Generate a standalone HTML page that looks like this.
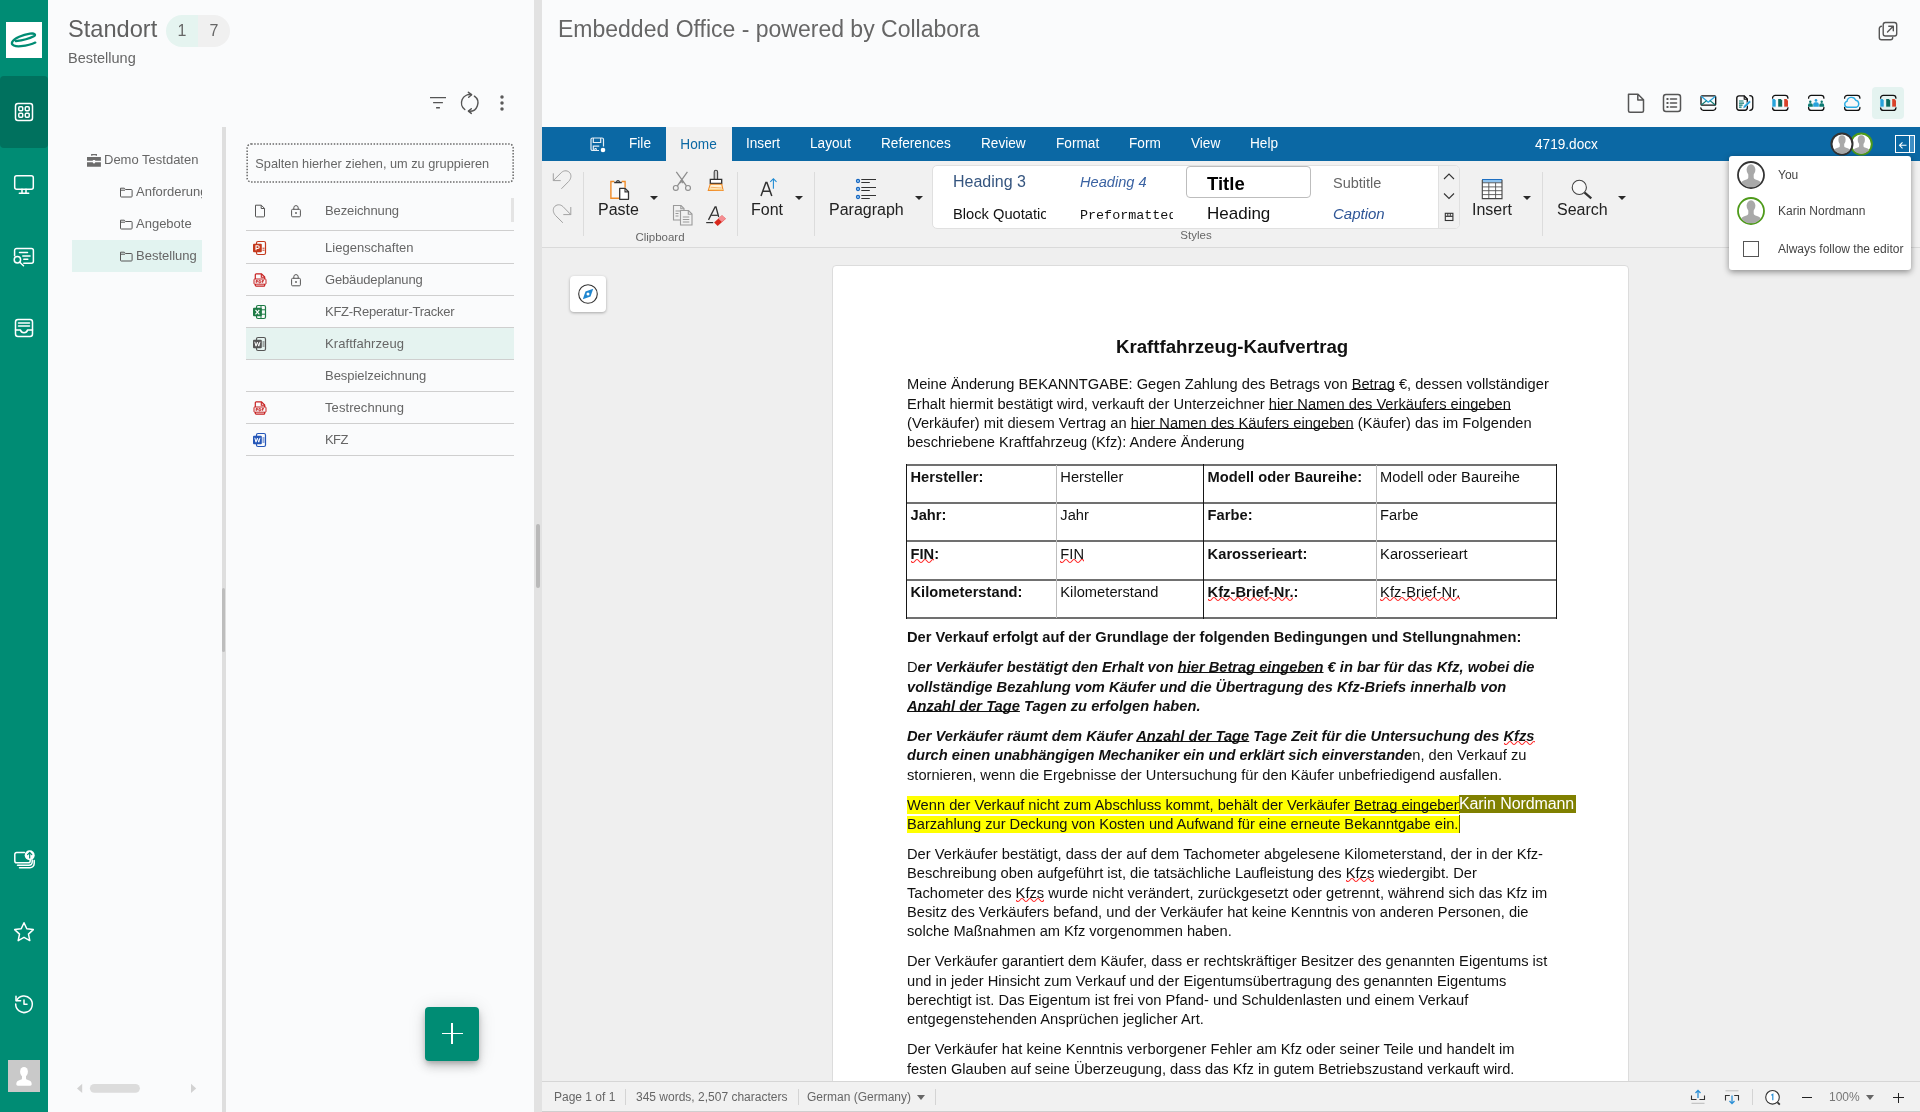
<!DOCTYPE html>
<html lang="de">
<head>
<meta charset="utf-8">
<title>Standort - Bestellung</title>
<style>
*{box-sizing:border-box;margin:0;padding:0}
html,body{width:1920px;height:1112px;overflow:hidden;background:#fafbfc;font-family:"Liberation Sans",sans-serif;color:#5a5a5a}
body{will-change:transform}
.abs{position:absolute}
#nav{position:absolute;left:0;top:0;width:48px;height:1112px;background:#008c74}
#nav .active{position:absolute;left:0;top:76px;width:48px;height:72px;background:#00715e;border-radius:4px}
#nav .logo{position:absolute;left:6px;top:22px;width:36px;height:36px;background:#fff}
#nav svg.ic{position:absolute;left:12px;width:24px;height:24px;fill:none;stroke:#fff;stroke-width:1.5;stroke-linecap:round;stroke-linejoin:round}
#nav .avatar{position:absolute;left:8px;top:1060px;width:32px;height:32px;background:#c9c9c9;overflow:hidden}
#lp{position:absolute;left:48px;top:0;width:486px;height:1112px;background:#fafbfc}
#split1{position:absolute;left:534px;top:0;width:8px;height:1112px;background:#e2e2e2}
#split1 i{position:absolute;left:2px;top:524px;width:4px;height:64px;background:#b9b9b9;border-radius:2px}
#split2{position:absolute;left:222px;top:127px;width:4px;height:985px;background:#dedede}
#split2 i{position:absolute;left:0;top:461px;width:3px;height:64px;background:#bdbdbd;border-radius:2px}
.h1{position:absolute;left:68px;top:12px;font-size:23.6px;line-height:34px;color:#606060;white-space:nowrap}
.h2{position:absolute;left:68px;top:49px;font-size:14.5px;line-height:18px;color:#666;white-space:nowrap}
.chip{position:absolute;left:166px;top:15px;width:64px;height:32px;border-radius:16px;overflow:hidden;font-size:16px;color:#666}
.chip b{font-weight:400;position:absolute;top:0;height:32px;line-height:31px;text-align:center}
.chip b.a{left:0;width:32px;background:#e5f4f0}
.chip b.b{left:32px;width:32px;background:#f0f0f0}
.lpic{position:absolute;width:24px;height:24px;fill:none;stroke:#555;stroke-width:1.5;stroke-linecap:round;stroke-linejoin:round}
.tree{position:absolute;font-size:13px;color:#666;white-space:nowrap;line-height:32px;height:32px;overflow:hidden}
.tree.sel{background:#e2f3f0}
.tree svg{position:absolute;top:9px;width:14px;height:14px}
.row{position:absolute;left:246px;width:268px;height:32px;border-bottom:1px solid #cfcfcf;font-size:13px;line-height:32px;color:#666;white-space:nowrap}
.row span{position:absolute;left:79px;top:0}
.row.sel{background:#e5f3f0;height:32px}
.row svg{position:absolute;top:8px;width:16px;height:16px}
.row svg.f{left:6px}
.row svg.l{left:42px}
#grp{position:absolute;left:246px;top:143px;width:268px;height:40px;border:2px solid transparent;border-radius:4px;font-size:12.75px;line-height:37px;padding-left:7.300px;color:#666;white-space:nowrap}
#fab{position:absolute;left:425px;top:1007px;width:54px;height:54px;background:#008c74;border-radius:4px;box-shadow:0 3px 5px -1px rgba(0,0,0,.2),0 6px 10px 0 rgba(0,0,0,.14),0 1px 18px 0 rgba(0,0,0,.12)}
#fab i{position:absolute;background:#fff}
#rp{position:absolute;left:542px;top:0;width:1378px;height:127px;background:#fafbfc}
.rt{position:absolute;left:558px;top:12px;font-size:23px;line-height:34px;color:#666;white-space:nowrap}
.rpic{position:absolute;top:91px;width:24px;height:24px;fill:none;stroke:#444;stroke-width:1.4;stroke-linecap:round;stroke-linejoin:round}
/* office */
#of{position:absolute;left:542px;top:127px;width:1378px;height:985px;background:#efefef;overflow:hidden;color:#2b2b2b}
#of .in{position:absolute;left:-542px;top:-127px;width:1920px;height:1112px}
#menubar{position:absolute;left:542px;top:127px;width:1378px;height:34px;background:#0b68a4}
#menubar .t{position:absolute;top:0;height:34px;line-height:33px;font-size:14.670px;transform:scaleX(.93);transform-origin:0 50%;color:#fff;white-space:nowrap}
#menubar .home{position:absolute;left:124px;top:0;width:66px;height:34px;background:#f1f1f1;color:#0b68a4;text-align:center;line-height:35px;font-size:14.670px}
#ribbon{position:absolute;left:542px;top:161px;width:1378px;height:87px;background:#f1f1f1;border-bottom:1px solid #dadada}
#status{position:absolute;left:542px;top:1081px;width:1378px;height:31px;background:#f1f1f1;border-top:1px solid #d6d6d6;border-bottom:1px solid #cfcfcf;font-size:12px;color:#666}
#page{position:absolute;left:832px;top:265px;width:797px;height:900px;background:#fff;border:1px solid #dcdcdc;border-radius:4px 4px 0 0}
.dl{position:absolute;left:907px;height:20px;line-height:20px;font-size:14.67px;color:#111;white-space:nowrap;letter-spacing:0.03px}
.dl u{text-decoration-thickness:1.1px;text-underline-offset:0.400px;text-decoration-skip-ink:none}
.dl .sp{text-decoration:none}
.bi{font-weight:bold;font-style:italic}
.hl{background:#ffff00}
.tc{position:absolute;font-size:14.67px;line-height:19px;color:#111;white-space:nowrap}
.dd{width:0;height:0;border-left:4px solid transparent;border-right:4px solid transparent;border-top:4.700px solid #2a2a2a}
.dd.g{border-left-width:4px;border-right-width:4px;border-top:5px solid #666}
.lbl{font-size:11.500px;line-height:14px;color:#666;text-align:center;white-space:nowrap}
.st{line-height:22px;white-space:nowrap}
#status .s{top:1px;line-height:29px;white-space:nowrap;font-size:12px}
#status .sv{top:7px;width:1px;height:16px;background:#d4d4d4}
</style>
</head>
<body>
<div id="nav">
  <div class="active"></div>
  <div class="logo">
    <svg viewBox="0 0 36 36" width="36" height="36"><path d="M9.800 19.200C16 18.400 24 16.200 27.800 14.200C30.500 12.600 28.500 11 24 11.700C17 12.800 8.200 16 6.200 20C4.800 23.200 9 24.800 15 24.200C21 23.600 26 22.300 29.300 20.600" fill="none" stroke="#008c74" stroke-width="2.300" stroke-linecap="round"/></svg>
  </div>
  <svg class="ic" style="top:100px" viewBox="0 0 24 24"><rect x="3.5" y="3.5" width="17" height="17" rx="2.5"/><rect x="6.8" y="6.8" width="3.9" height="3.9" rx="1"/><rect x="13.3" y="6.8" width="3.9" height="3.9" rx="1"/><rect x="6.8" y="13.3" width="3.9" height="3.9" rx="1"/><rect x="13.3" y="13.3" width="3.9" height="3.9" rx="1"/></svg>
  <svg class="ic" style="top:173px" viewBox="0 0 24 24"><rect x="2.700" y="2.800" width="18.600" height="13.400" rx="2"/><path d="M10 16.300v3.600M14 16.300v3.600M7.300 20.200h9.400"/></svg>
  <svg class="ic" style="top:245px" viewBox="0 0 24 24"><path d="M2.600 10.800V5.500a2 2 0 0 1 2-2h14.800a2 2 0 0 1 2 2v10.800a2 2 0 0 1-2 2h-7.600"/><path d="M7.500 7.500h8M10.800 11h7.200M11.800 14.300h4"/><circle cx="5.400" cy="14.800" r="3.200"/><path d="M7.800 17.200l3.700 3.500"/></svg>
  <svg class="ic" style="top:316px" viewBox="0 0 24 24"><rect x="3.5" y="3.5" width="17" height="17" rx="2.5"/><path d="M6.5 7h11M6.5 10h11"/><path d="M3.5 14h5c.4 1.8 1.7 2.7 3.5 2.7s3.100-.9 3.500-2.700h5"/></svg>
  <svg class="ic" style="top:846px" viewBox="0 0 24 24"><path d="M12.500 6.600H4.600a1.800 1.800 0 0 0-1.800 1.800v6.500a1.800 1.800 0 0 0 1.800 1.800h11.800a1.800 1.800 0 0 0 1.800-1.800v-1"/><path d="M5.500 19.300h11.500a3.200 3.200 0 0 0 3.200-3.200v-2"/><path d="M7.500 21.800h10.500a4.200 4.200 0 0 0 4.200-4.200v-3"/><circle cx="17.700" cy="9.200" r="5" fill="#fff" stroke="none"/><path d="M17.700 12V6.600M15.600 8.600l2.100-2.100 2.100 2.100" stroke="#008c74" stroke-width="1.200"/></svg>
  <svg class="ic" style="top:920px" viewBox="0 0 24 24"><path d="M12 2.800l2.800 6 6.500.800-4.800 4.500 1.300 6.500L12 17.300l-5.800 3.300 1.300-6.500L2.700 9.600l6.500-.8z"/></svg>
  <svg class="ic" style="top:992px" viewBox="0 0 24 24"><path d="M4.600 8.500A8.300 8.300 0 1 1 3.700 12"/><path d="M4 4.200v4.600h4.600"/><path d="M12 8v4.300h3" /></svg>
  <div class="avatar"><svg viewBox="0 0 32 32" width="32" height="32"><ellipse cx="16" cy="11.800" rx="3.900" ry="4.900" fill="#fff"/><path d="M14 15v3.200c0 1-.8 1.400-2.600 2-2 .7-3.100 1.700-3.100 3.800 0 1 .5 1.700 1.500 1.700h12.400c1 0 1.500-.7 1.500-1.700 0-2.100-1.100-3.100-3.100-3.800-1.800-.6-2.600-1-2.600-2V15z" fill="#fff"/></svg></div>
</div>
<div id="lp"></div>
<div class="h1">Standort</div>
<div class="chip"><b class="a">1</b><b class="b">7</b></div>
<div class="h2">Bestellung</div>
<svg class="lpic" style="left:426px;top:91px" viewBox="0 0 24 24" stroke="#5a5a5a"><path d="M4 6.600h16M7.100 11.600h9.800M10.100 16.700h3.800" stroke-width="1.350" stroke-linecap="butt"/></svg>
<svg class="lpic" style="left:458px;top:91px" viewBox="0 0 24 24" stroke="#5a5a5a"><path d="M13.300 3.700A8.300 8.300 0 0 0 6.800 18.500M16.400 5.200A8.300 8.300 0 0 1 10.700 20.200" stroke-width="1.450"/><path d="M10.400 1.300l3.200 2.400-2.900 2.600M13.300 17.700l-2.900 2.400 2.900 2.300" stroke-width="1.450"/></svg>
<svg class="lpic" style="left:490px;top:91px" viewBox="0 0 24 24"><circle cx="12" cy="5.900" r="1.750" fill="#5a5a5a" stroke="none"/><circle cx="12" cy="12" r="1.750" fill="#5a5a5a" stroke="none"/><circle cx="12" cy="18.100" r="1.750" fill="#5a5a5a" stroke="none"/></svg>
<div id="split2"><i></i></div>
<div class="tree" style="left:72px;top:144px;width:130px"><svg style="left:14px;width:16px;height:14px" viewBox="0 0 16 14"><path d="M1 4.100h13.900v3.650H1z M1 9.200h13.900v4.600H1z" fill="#6c6c6c"/><path d="M5.100 1.100h5.900v1.700h-1.300v-.6H6.400v.6H5.100z" fill="#6c6c6c"/><rect x="7" y="7" width="2" height="3.300" fill="#fafbfc"/><rect x="6.400" y="7.750" width="3.200" height="1.450" fill="#fafbfc"/></svg><span style="position:absolute;left:32px">Demo Testdaten</span></div>
<div class="tree" style="left:72px;top:176px;width:130px"><svg style="left:47px" viewBox="0 0 14 14"><path d="M1.500 3.200h3.800l1.200 1.300h5.800a.8.800 0 0 1 .8.800v5.900a.8.800 0 0 1-.8.800H2.300a.8.800 0 0 1-.8-.8z M1.500 5.200h4.500" fill="none" stroke="#555" stroke-width="1"/></svg><span style="position:absolute;left:64px">Anforderungen</span></div>
<div class="tree" style="left:72px;top:208px;width:130px"><svg style="left:47px" viewBox="0 0 14 14"><path d="M1.500 3.200h3.800l1.200 1.300h5.800a.8.800 0 0 1 .8.800v5.900a.8.800 0 0 1-.8.800H2.300a.8.800 0 0 1-.8-.8z M1.500 5.200h4.500" fill="none" stroke="#555" stroke-width="1"/></svg><span style="position:absolute;left:64px">Angebote</span></div>
<div class="tree sel" style="left:72px;top:240px;width:130px"><svg style="left:47px" viewBox="0 0 14 14"><path d="M1.500 3.200h3.800l1.200 1.300h5.800a.8.800 0 0 1 .8.800v5.900a.8.800 0 0 1-.8.800H2.300a.8.800 0 0 1-.8-.8z M1.500 5.200h4.500" fill="none" stroke="#555" stroke-width="1"/></svg><span style="position:absolute;left:64px">Bestellung</span></div>
<svg class="abs" style="left:245px;top:142px" width="270" height="42"><rect x="2.150" y="1.900" width="266" height="38.100" rx="4" fill="none" stroke="#686868" stroke-width="1.500" stroke-dasharray="1.500 1.560"/></svg><div id="grp">Spalten hierher ziehen, um zu gruppieren</div>
<div class="abs" style="left:511px;top:198px;width:3px;height:24px;background:#e4e4e4"></div>
<div class="row" style="top:195px;height:36px;line-height:32px"><svg class="f" style="top:7.500px" viewBox="0 0 16 16"><path d="M3.500 2.200h5.800l3.200 3.200v7.600a.9.900 0 0 1-.9.900H4.400a.9.900 0 0 1-.9-.9z M9.200 2.300v3.200h3.200" fill="none" stroke="#555" stroke-width="1"/></svg><svg class="l" style="top:7.500px" viewBox="0 0 16 16"><rect x="3.600" y="6.300" width="8.800" height="7.500" rx="1" fill="none" stroke="#555" stroke-width="1"/><path d="M5.800 6.300V4.800a2.200 2.200 0 0 1 4.400 0v1.500" fill="none" stroke="#555" stroke-width="1"/><circle cx="8" cy="10" r=".9" fill="#555"/></svg><span style="letter-spacing:-0.115px">Bezeichnung</span></div>
<div class="row" style="top:232px"><svg class="f" viewBox="0 0 16 16"><rect x="4.500" y="1.500" width="9" height="13" rx="1.500" fill="none" stroke="#c4391d" stroke-width="1.200"/><rect x="1" y="3.800" width="8.800" height="8.400" rx="1" fill="#c4391d"/><path d="M4 10.300V5.700h1.800a1.400 1.400 0 0 1 0 2.800H4" fill="none" stroke="#fff" stroke-width="1.100"/><path d="M10.500 8.200h2M10.500 10.200h2" stroke="#c4391d" stroke-width="1"/></svg><span style="letter-spacing:0.03px">Liegenschaften</span></div>
<div class="row" style="top:264px"><svg class="f" viewBox="0 0 16 16"><path d="M3.300 7V2.800a.9.900 0 0 1 .9-.9h5.300l3.200 3.200V7" fill="none" stroke="#c62020" stroke-width="1.200"/><path d="M9.300 2v3.200h3.200" fill="none" stroke="#c62020" stroke-width="1.100"/><rect x="2" y="7" width="12" height="5.200" rx=".8" fill="#fafbfc" stroke="#c62020" stroke-width="1"/><path d="M3.300 12v1.300a.9.900 0 0 0 .9.900h7.600a.9.900 0 0 0 .9-.9V12" fill="none" stroke="#c62020" stroke-width="1.200"/><path d="M4.200 10.800V8.500h.9a.7.700 0 0 1 0 1.400h-.9M7 8.500v2.300h.700a1.100 1.100 0 0 0 0-2.300zM10.300 10.800V8.500h1.500M10.300 9.700h1.200" fill="none" stroke="#c62020" stroke-width=".95"/></svg><svg class="l" viewBox="0 0 16 16"><rect x="3.600" y="6.300" width="8.800" height="7.500" rx="1" fill="none" stroke="#555" stroke-width="1"/><path d="M5.800 6.300V4.800a2.200 2.200 0 0 1 4.400 0v1.500" fill="none" stroke="#555" stroke-width="1"/><circle cx="8" cy="10" r=".9" fill="#555"/></svg><span style="letter-spacing:-0.155px">Gebäudeplanung</span></div>
<div class="row" style="top:296px"><svg class="f" viewBox="0 0 16 16"><rect x="4.500" y="1.500" width="9" height="13" rx="1.500" fill="none" stroke="#1e7a45" stroke-width="1.200"/><path d="M9 1.500v13M9 5.800h4.500M9 10.200h4.500" stroke="#1e7a45" stroke-width="1"/><rect x="1" y="3.800" width="8.800" height="8.400" rx="1" fill="#1e7a45"/><path d="M3.500 5.800l3.800 4.500M7.300 5.800l-3.800 4.500" stroke="#fff" stroke-width="1.200"/></svg><span style="letter-spacing:-0.253px">KFZ-Reperatur-Tracker</span></div>
<div class="row sel" style="top:328px"><svg class="f" viewBox="0 0 16 16"><rect x="4.500" y="1.500" width="9" height="13" rx="1.500" fill="none" stroke="#555" stroke-width="1.200"/><path d="M10.500 6h2M10.500 8h2M10.500 10h2" stroke="#555" stroke-width="1"/><rect x="1" y="3.800" width="8.800" height="8.400" rx="1" fill="#555"/><path d="M2.800 5.800l1.200 4.400 1.400-4 1.400 4 1.200-4.400" fill="none" stroke="#fff" stroke-width="1"/></svg><span style="letter-spacing:0.073px">Kraftfahrzeug</span></div>
<div class="row" style="top:360px"><span style="letter-spacing:-0.044px">Bespielzeichnung</span></div>
<div class="row" style="top:392px"><svg class="f" viewBox="0 0 16 16"><path d="M3.300 7V2.800a.9.900 0 0 1 .9-.9h5.300l3.200 3.200V7" fill="none" stroke="#c62020" stroke-width="1.200"/><path d="M9.300 2v3.200h3.200" fill="none" stroke="#c62020" stroke-width="1.100"/><rect x="2" y="7" width="12" height="5.200" rx=".8" fill="#fafbfc" stroke="#c62020" stroke-width="1"/><path d="M3.300 12v1.300a.9.900 0 0 0 .9.900h7.600a.9.900 0 0 0 .9-.9V12" fill="none" stroke="#c62020" stroke-width="1.200"/><path d="M4.200 10.800V8.500h.9a.7.700 0 0 1 0 1.400h-.9M7 8.500v2.300h.700a1.100 1.100 0 0 0 0-2.300zM10.300 10.800V8.500h1.500M10.300 9.700h1.200" fill="none" stroke="#c62020" stroke-width=".95"/></svg><span style="letter-spacing:0.078px">Testrechnung</span></div>
<div class="row" style="top:424px"><svg class="f" viewBox="0 0 16 16"><rect x="4.500" y="1.500" width="9" height="13" rx="1.500" fill="none" stroke="#2456b8" stroke-width="1.200"/><path d="M10.500 6h2M10.500 8h2M10.500 10h2" stroke="#2456b8" stroke-width="1"/><rect x="1" y="3.800" width="8.800" height="8.400" rx="1" fill="#2456b8"/><path d="M2.800 5.800l1.200 4.400 1.400-4 1.400 4 1.200-4.400" fill="none" stroke="#fff" stroke-width="1"/></svg><span style="letter-spacing:-0.59px">KFZ</span></div>
<div id="fab"><i style="left:16.500px;top:25.900px;width:21px;height:1.300px"></i><i style="left:26.300px;top:16.300px;width:1.300px;height:21px"></i></div>
<svg class="abs" style="left:76px;top:1082px" width="124" height="13" viewBox="0 0 124 13"><path d="M6.200 1.800v9.200L1 6.400z" fill="#d2d2d2"/><path d="M115 1.800v9.200l5.200-4.600z" fill="#d2d2d2"/><rect x="13.900" y="1.900" width="50" height="8.800" rx="4.400" fill="#dcdcdc"/></svg>
<div id="split1"><i></i></div>
<div id="rp"></div>
<div class="rt">Embedded Office - powered by Collabora</div>
<svg class="rpic" style="left:1876px;top:19px" viewBox="0 0 24 24"><rect x="7.200" y="3.500" width="13.500" height="13.500" rx="2.200" stroke="#555"/><path d="M5.500 7.300a2.200 2.200 0 0 0-2.200 2.200v9a2.200 2.200 0 0 0 2.200 2.200h9a2.200 2.200 0 0 0 2.200-2.200" stroke="#555"/><path d="M11.500 13l5.700-5.700M12.800 7.200h4.500v4.500" stroke="#555"/></svg>
<div class="abs" style="left:1872px;top:87px;width:32px;height:32px;border-radius:4px;background:#e4f3f0"></div>
<svg class="rpic" style="left:1624px" viewBox="0 0 24 24"><path d="M4.500 3.300h9.500l5.500 5.500v11a1.500 1.500 0 0 1-1.500 1.500H6a1.500 1.500 0 0 1-1.500-1.500z M13.800 3.500v5.500h5.500" stroke="#555" stroke-width="1.500"/></svg>
<svg class="rpic" style="left:1660px" viewBox="0 0 24 24"><rect x="3.500" y="3.500" width="17" height="17" rx="2.500" stroke="#555" stroke-width="1.500"/><path d="M10.500 8h6M10.500 12h6M10.500 16h6" stroke="#555" stroke-width="1.600"/><path d="M7.200 8h.6M7.200 12h.6M7.200 16h.6" stroke="#555" stroke-width="1.800"/></svg>
<svg class="rpic" style="left:1696px" viewBox="0 0 24 24"><rect x="5" y="4.900" width="14.700" height="9.300" rx="1" fill="#f4f9fc" stroke="#111" stroke-width="1.300"/><path d="M5.500 5.600l6.800 5.600 6.800-5.600" stroke="#27a3dc" stroke-width="1.300"/><path d="M5.600 13.700l4.700-3.800M19 13.700l-4.700-3.800" stroke="#0c7a72" stroke-width="1.200"/><path d="M4.800 16.800a2.700 2.700 0 0 0 2.600 2.500h9.800a2.700 2.700 0 0 0 2.600-2.500" stroke="#111" stroke-width="1.300"/></svg>
<svg class="rpic" style="left:1732px" viewBox="0 0 24 24"><path d="M7 4.900h5.300l3 3V17a2.200 2.200 0 0 1-2.200 2.200H7A2.200 2.200 0 0 1 4.800 17V7.100A2.200 2.200 0 0 1 7 4.900z" fill="#fafbfc" stroke="#111" stroke-width="1.400"/><path d="M12.200 5v3.200h3.100" stroke="#111" stroke-width="1.100"/><path d="M7 10h4.500M7 12.100h5M7 14.100h3.600M7 16.100h2.600" stroke="#0c7a72" stroke-width="1.200" stroke-linecap="butt"/><path d="M11 17.300l.5-2.300 5.800-5.600 1.700 1.700-5.800 5.600z" fill="#27a3dc" stroke="#fafbfc" stroke-width=".5"/><path d="M17.800 4.700a3 3 0 0 1 3 3v8.600a3 3 0 0 1-3 3" stroke="#111" stroke-width="1.300"/></svg>
<svg class="rpic" style="left:1768px" viewBox="0 0 24 24"><path d="M4.600 7.200V7a2.700 2.700 0 0 1 2.700-2.700h9.900A2.700 2.700 0 0 1 19.900 7v.2M4.600 16.500v.2a2.700 2.700 0 0 0 2.700 2.700h9.900a2.700 2.700 0 0 0 2.700-2.700v-.2" stroke="#111" stroke-width="1.300"/><path d="M4.300 8h2.200l1.200 1.300v6.500H4.300z" fill="#27a3dc" stroke="none"/><path d="M10.200 8h2.600l1.400 1.400v6.400h-4z" fill="#0c6b5e" stroke="none"/><path d="M16.200 8h2.300l1.500 1.600v6.200h-3.800z" fill="#d8432a" stroke="none"/><path d="M4.300 16.300h3.400M10.200 16.300h4M16.200 16.300h3.800" stroke="#d5e6ee" stroke-width=".6"/></svg>
<svg class="rpic" style="left:1804px" viewBox="0 0 24 24"><path d="M4.600 7.200V7a2.700 2.700 0 0 1 2.700-2.700h9.900A2.700 2.700 0 0 1 19.900 7v.2M4.600 16.500v.2a2.700 2.700 0 0 0 2.700 2.700h9.900a2.700 2.700 0 0 0 2.700-2.700v-.2" stroke="#111" stroke-width="1.300"/><circle cx="6.300" cy="10.700" r="1.200" fill="#0c7a72" stroke="none"/><path d="M4 15.800v-1.700a1.800 1.800 0 0 1 1.800-1.800h1.200a1.800 1.800 0 0 1 1.800 1.800v1.700z" fill="#0c7a72" stroke="none"/><circle cx="17.700" cy="10.700" r="1.200" fill="#0c7a72" stroke="none"/><path d="M15.300 15.800v-1.700a1.800 1.800 0 0 1 1.800-1.800h1.200a1.800 1.800 0 0 1 1.800 1.800v1.700z" fill="#0c7a72" stroke="none"/><circle cx="12" cy="9.400" r="1.350" fill="#27a3dc" stroke="none"/><path d="M9.200 15.800v-2.600a2 2 0 0 1 2-2h1.600a2 2 0 0 1 2 2v2.600z" fill="#27a3dc" stroke="none"/></svg>
<svg class="rpic" style="left:1840px" viewBox="0 0 24 24"><path d="M4.600 7.200V7a2.700 2.700 0 0 1 2.700-2.700h9.900A2.700 2.700 0 0 1 19.900 7v.2M4.600 16.500v.2a2.700 2.700 0 0 0 2.700 2.700h9.900a2.700 2.700 0 0 0 2.700-2.700v-.2" stroke="#111" stroke-width="1.300"/><path d="M7.600 16.300a3 3 0 0 1-.6-5.900 4.500 4.500 0 0 1 8.700-1.100 3.600 3.600 0 0 1 .5 7z" stroke="#29abe2" stroke-width="1.400" fill="#f7f7f7"/></svg>
<svg class="rpic" style="left:1876px" viewBox="0 0 24 24"><path d="M4.600 7.200V7a2.700 2.700 0 0 1 2.700-2.700h9.900A2.700 2.700 0 0 1 19.900 7v.2M4.600 16.500v.2a2.700 2.700 0 0 0 2.700 2.700h9.900a2.700 2.700 0 0 0 2.700-2.700v-.2" stroke="#111" stroke-width="1.300"/><path d="M4.300 8h2.200l1.200 1.300v6.500H4.300z" fill="#27a3dc" stroke="none"/><path d="M10.200 8h2.600l1.400 1.400v6.400h-4z" fill="#0c6b5e" stroke="none"/><path d="M16.200 8h2.300l1.500 1.600v6.200h-3.800z" fill="#d8432a" stroke="none"/><path d="M4.300 16.300h3.400M10.200 16.300h4M16.200 16.300h3.800" stroke="#cfe4e4" stroke-width=".6"/></svg>
<div id="of"><div class="in">
<div id="menubar">
  <div class="home"><span style="display:inline-block;transform:scaleX(.93)">Home</span></div>
  <svg class="abs" style="left:46px;top:8px" width="20" height="20" viewBox="0 0 20 20" fill="none" stroke="#e6eef5" stroke-width="1.200"><path d="M3 4.500a1.500 1.500 0 0 1 1.500-1.500h9.500a1.500 1.500 0 0 1 1.500 1.500v7M3 4.500v9.500a1.500 1.500 0 0 0 1.500 1.500h6.500"/><path d="M5.300 3v4.500h7.400V3M5.300 15.500v-4.300h6"/><path d="M6.800 15.500v-2h1.500v2" stroke-width="1"/><circle cx="15" cy="15" r="2.300" fill="#fff" stroke="none"/></svg>
  <div class="t" style="left:87px">File</div>
  <div class="t" style="left:204px">Insert</div>
  <div class="t" style="left:268px">Layout</div>
  <div class="t" style="left:339px">References</div>
  <div class="t" style="left:439px">Review</div>
  <div class="t" style="left:514px">Format</div>
  <div class="t" style="left:587px">Form</div>
  <div class="t" style="left:649px">View</div>
  <div class="t" style="left:708px">Help</div>
  <div class="t" style="left:993px;line-height:34px">4719.docx</div>
  <svg class="abs" style="left:1287px;top:3px" width="46" height="28" viewBox="0 0 46 28"><defs><clipPath id="c1"><circle cx="13" cy="14" r="10"/></clipPath><clipPath id="c2"><circle cx="32.300" cy="14" r="10"/></clipPath></defs><circle cx="32.300" cy="14" r="10.500" fill="#fff" stroke="#4e9a1a" stroke-width="2"/><g clip-path="url(#c2)" fill="#a9a9a9"><ellipse cx="32.300" cy="9.800" rx="3.600" ry="4.500"/><path d="M30.100 12.500v3.500c0 1-.8 1.400-2.700 2.100-2.200.7-3.600 1.800-3.600 4v3h17v-3c0-2.200-1.400-3.300-3.600-4-1.900-.7-2.700-1.100-2.700-2.100v-3.500z"/></g><circle cx="13" cy="14" r="10.500" fill="#fff" stroke="#333" stroke-width="2"/><g clip-path="url(#c1)" fill="#a9a9a9"><ellipse cx="13" cy="9.800" rx="3.600" ry="4.500"/><path d="M10.800 12.500v3.500c0 1-.8 1.400-2.700 2.100-2.200.7-3.600 1.800-3.600 4v3h17v-3c0-2.200-1.400-3.300-3.600-4-1.900-.7-2.700-1.100-2.700-2.100v-3.500z"/></g></svg>
  <svg class="abs" style="left:1352px;top:7px" width="22" height="20" viewBox="0 0 22 20"><rect x="1.500" y="1.500" width="19" height="17" fill="none" stroke="#fff" stroke-width="1"/><rect x="15.500" y="2" width="4.500" height="16" fill="#3f8ec4"/><path d="M15.500 1.500v17" stroke="#fff" stroke-width="1"/><path d="M5.500 11.300h7M8.500 8.300l-3 3 3 3" fill="none" stroke="#fff" stroke-width="1.100"/></svg>
</div>
<div id="ribbon">
  <!-- separators -->
  <div class="abs" style="left:41px;top:11px;width:1px;height:64px;background:#dcdcdc"></div>
  <div class="abs" style="left:195px;top:11px;width:1px;height:64px;background:#dcdcdc"></div>
  <div class="abs" style="left:272px;top:11px;width:1px;height:64px;background:#dcdcdc"></div>
  <div class="abs" style="left:1000px;top:11px;width:1px;height:64px;background:#dcdcdc"></div>
  <!-- undo / redo -->
  <svg class="abs" style="left:9px;top:8px" width="22" height="22" viewBox="0 0 22 22" fill="none" stroke="#a2a2a2" stroke-width="1"><path d="M2.300 4.300V11.600H9.700"/><path d="M2.300 11.600L10.400 3.500C13 1 17.200 1.300 19.100 4.200C20.800 7 19.600 10.500 17.500 12.600L10.400 19.800"/></svg>
  <svg class="abs" style="left:9px;top:42px" width="22" height="22" viewBox="0 0 22 22" fill="none" stroke="#a2a2a2" stroke-width="1"><path d="M19.800 4V11.600H12.300"/><path d="M19.800 11.600L11.900 3.500C9.300 1 5.100 1.300 3.100 4.200C1.400 7 2.600 10.500 4.600 12.600L11.900 19.800"/></svg>
  <!-- paste -->
  <svg class="abs" style="left:66px;top:17px" width="24" height="24" viewBox="0 0 24 24" fill="none"><rect x="3" y="3.600" width="14" height="16.500" fill="#f9f9f9"/><path d="M6.300 3.500H2.900V20.200H11.200M13.700 3.500H17.100V9.800" stroke="#f08c28" stroke-width="1.400"/><path d="M6.200 4.500h7.600" stroke="#333" stroke-width="1.500"/><path d="M8.400 3.900a1.650 1.650 0 0 1 3.200 0" stroke="#333" stroke-width="1.100"/><path d="M11.700 10.400h5.400l3.400 3.400v7.500h-8.800z" fill="#fff" stroke="#333" stroke-width="1.300" stroke-linejoin="round"/><path d="M17 10.600v3.300h3.300" stroke="#333" stroke-width="1.100"/></svg>
  <div class="abs" style="left:56px;top:39px;font-size:16px;line-height:20px;color:#222">Paste</div>
  <div class="abs dd" style="left:108px;top:35px"></div>
  <!-- cut -->
  <svg class="abs" style="left:130px;top:9px" width="22" height="22" viewBox="0 0 22 22" fill="none" stroke="#8e8e8e"><path d="M4.300 1.800L14.400 15.800M15.400 1.800L5.400 15.800" stroke-width="1.250"/><path d="M8.200 13L9.700 10.300 11.300 13" stroke-width="1.800"/><circle cx="3.800" cy="17.900" r="2.450" stroke-width="1.150"/><circle cx="16" cy="17.900" r="2.450" stroke-width="1.150"/></svg>
  <!-- copy -->
  <svg class="abs" style="left:129px;top:42px" width="24" height="24" viewBox="0 0 24 24" fill="none" stroke="#9a9a9a" stroke-width="1.100"><path d="M2.500 2.500h7.500l3 3v11.500h-10.500z" fill="#f1f1f1"/><path d="M9.800 2.700v3h3"/><path d="M4.500 8h5M4.500 10.500h3M4.500 13h3"/><path d="M9.500 7.500h8l3.500 3.500v11h-11.500z" fill="#f1f1f1"/><path d="M17.300 7.700v3.500h3.500"/><path d="M11.800 14h6.500M11.800 16.500h6.500M11.800 19h6.500"/></svg>
  <!-- clone brush -->
  <svg class="abs" style="left:163px;top:7px" width="22" height="24" viewBox="0 0 22 24" fill="none"><path d="M9.200 11V3.900a1.700 1.700 0 0 1 3.400 0V11" stroke="#444" stroke-width="1.100" fill="#cfcfcf"/><path d="M5.300 11.300h11.400v4.200H5.300z" stroke="#2f2f2f" stroke-width="1.300" fill="#fff"/><path d="M5.200 16.300h11.600l1.300 6.200H3.300z" fill="#fff3d6" stroke="#f08c28" stroke-width="1.100"/><path d="M5.500 19.200l11.300.8" stroke="#f6b26b" stroke-width="1.100"/><path d="M4 21.300l13.500.3" stroke="#fbd38a" stroke-width="1.400"/></svg>
  <!-- clear formatting -->
  <svg class="abs" style="left:161px;top:42px" width="26" height="24" viewBox="0 0 26 24" fill="none"><path d="M5.500 16.900L12.100 4h.9l2.700 10" stroke="#333" stroke-width="1.300"/><path d="M8.200 12.300h6.600" stroke="#333" stroke-width="1.200"/><path d="M3.200 19.600h7" stroke="#333" stroke-width="1.200"/><path d="M19 12.200l3.800 3.500-8.200 7.200-3.500-3.400z" fill="#d8281c"/><path d="M19 12.200l3.800 3.500-3.900 3.400-3.700-3.500z" fill="#f58d92"/></svg>
  <!-- font -->
  <svg class="abs" style="left:213px;top:14px" width="28" height="26" viewBox="0 0 28 26" fill="none"><path d="M6 20.900L10.900 7.400h1L16.800 20.900M7.700 16.300h7.400" stroke="#333" stroke-width="1.500"/><path d="M18.400 13.800V3.800M15.300 6.900l3.100-3.200 3.100 3.200" stroke="#1f8ad2" stroke-width="1.100"/></svg>
  <div class="abs" style="left:209px;top:39px;font-size:16px;line-height:20px;color:#222">Font</div>
  <div class="abs dd" style="left:253px;top:35px"></div>
  <!-- paragraph -->
  <svg class="abs" style="left:312px;top:16px" width="24" height="24" viewBox="0 0 24 24" fill="none"><path d="M7.300 2.500H22M7.300 10.500H22M7.300 18.500H22M7.300 5.500h8.500M7.300 13.500h8.500M7.300 21.500h8.500" stroke="#333" stroke-width="1"/><circle cx="4" cy="4" r="1.600" stroke="#1565c0" stroke-width="1.100" fill="#8ec3ee"/><circle cx="4" cy="12" r="1.600" stroke="#1565c0" stroke-width="1.100" fill="#8ec3ee"/><circle cx="4" cy="20" r="1.600" stroke="#1565c0" stroke-width="1.100" fill="#8ec3ee"/></svg>
  <div class="abs" style="left:287px;top:39px;font-size:16px;line-height:20px;color:#222">Paragraph</div>
  <div class="abs dd" style="left:373px;top:35px"></div>
  <div class="abs lbl" style="left:88px;top:69px;width:60px">Clipboard</div>
  <!-- styles -->
  <div class="abs" style="left:390px;top:4px;width:528px;height:64px;background:#fff;border:1px solid #e0e0e0;border-radius:5px"></div>
  <div class="abs" style="left:896px;top:5px;width:21px;height:62px;background:#f1f1f1;border-left:1px solid #e0e0e0;border-radius:0 4px 4px 0"></div>
  <div class="abs" style="left:644px;top:5px;width:125px;height:32px;border:1px solid #bdbdbd;border-radius:4px;background:#fff"></div>
  <div class="abs st" style="left:411px;top:10px;font-size:16px;color:#35557f">Heading 3</div>
  <div class="abs st" style="left:538px;top:10px;font-size:14.600px;font-style:italic;color:#3a62a2">Heading 4</div>
  <div class="abs st" style="left:665px;top:12px;font-size:18.500px;font-weight:bold;color:#000">Title</div>
  <div class="abs st" style="left:791px;top:11px;font-size:14.500px;color:#666">Subtitle</div>
  <div class="abs st" style="left:411px;top:42px;font-size:14.700px;color:#111;width:92.500px;overflow:hidden">Block Quotation</div>
  <div class="abs st" style="left:538px;top:44px;font-size:13.400px;font-family:'Liberation Mono',monospace;color:#111;width:92.500px;overflow:hidden">Preformatted</div>
  <div class="abs st" style="left:665px;top:42px;font-size:17px;color:#111">Heading</div>
  <div class="abs st" style="left:791px;top:42px;font-size:15px;font-style:italic;color:#2e5596">Caption</div>
  <svg class="abs" style="left:898px;top:5px" width="18" height="62" viewBox="0 0 18 62" fill="none" stroke="#333" stroke-width="1.100"><path d="M4 13l5-5 5 5M4 27.500l5 5 5-5"/><rect x="5.300" y="47.300" width="7.600" height="7.200" stroke-width="1.100"/><path d="M5.300 50.300h7.600" stroke-width="1.200"/><path d="M7.800 47.300v2.600M10.300 47.300v2.600" stroke-width="1"/></svg>
  <div class="abs lbl" style="left:624px;top:67px;width:60px">Styles</div>
  <!-- insert -->
  <svg class="abs" style="left:938px;top:16px" width="24" height="24" viewBox="0 0 24 24" fill="none"><rect x="2.300" y="2.300" width="19.700" height="19.300" fill="#fff"/><rect x="2.300" y="2.300" width="19.700" height="3.500" fill="#8fc3ee"/><path d="M2 2.500h20.300" stroke="#1e6fc1" stroke-width="1"/><path d="M2.300 5.800H22M2.300 9.900H22M2.300 13.700H22M2.300 17.600H22M8.800 5.800v15.800M15.600 5.800v15.800" stroke="#555" stroke-width=".9"/><path d="M2.300 3v18.600H22V3" stroke="#444" stroke-width="1.100"/></svg>
  <div class="abs" style="left:930px;top:39px;font-size:16px;line-height:20px;color:#222">Insert</div>
  <div class="abs dd" style="left:981px;top:35px"></div>
  <!-- search -->
  <svg class="abs" style="left:1027px;top:15px" width="26" height="26" viewBox="0 0 26 26" fill="none"><circle cx="10.300" cy="11.400" r="7.100" stroke="#444" stroke-width="1.100" fill="#f8f8f8"/><path d="M15.600 16.700l6.700 5.600" stroke="#333" stroke-width="2.300"/></svg>
  <div class="abs" style="left:1015px;top:39px;font-size:16px;line-height:20px;color:#222">Search</div>
  <div class="abs dd" style="left:1076px;top:35px"></div>
</div>
<!-- doc area -->
<div class="abs" style="left:570px;top:276px;width:36px;height:36px;background:#fff;border-radius:4px;box-shadow:0 1px 3px rgba(0,0,0,.3)"><svg width="36" height="36" viewBox="0 0 36 36" fill="none"><circle cx="18" cy="18" r="9.300" stroke="#333" stroke-width="1.100"/><path d="M23.200 12.800l-2.700 7.700-7.700 2.700 2.700-7.700z" fill="#1f86d0"/><circle cx="18" cy="18" r="1.500" fill="#fff"/></svg></div>
<div id="page"></div>
<div class="abs" style="left:1116px;top:336px;font-size:18.67px;line-height:22px;font-weight:bold;color:#111;white-space:nowrap">Kraftfahrzeug-Kaufvertrag</div>
<div class="dl " style="letter-spacing:-0.0023px;top:374px;left:907px;">Meine Änderung BEKANNTGABE: Gegen Zahlung des Betrags von <u>Betrag</u> €, dessen vollständiger</div>
<div class="dl " style="letter-spacing:0.0026px;top:394px;left:907px;">Erhalt hiermit bestätigt wird, verkauft der Unterzeichner <u>hier Namen des Verkäufers eingeben</u></div>
<div class="dl " style="letter-spacing:0.0161px;top:413px;left:907px;">(Verkäufer) mit diesem Vertrag an <u>hier Namen des Käufers eingeben</u> (Käufer) das im Folgenden</div>
<div class="dl " style="letter-spacing:0.0018px;top:432px;left:907px;">beschriebene Kraftfahrzeug (Kfz): Andere Änderung</div>
<div class="abs" style="left:906px;top:464px;width:651px;height:155px;background:#fff"></div>
<div class="abs" style="left:906px;top:464.15px;width:651px;height:1.7px;background:#707070"></div>
<div class="abs" style="left:906px;top:501.85px;width:651px;height:1.7px;background:#707070"></div>
<div class="abs" style="left:906px;top:540.15px;width:651px;height:1.7px;background:#707070"></div>
<div class="abs" style="left:906px;top:578.85px;width:651px;height:1.7px;background:#707070"></div>
<div class="abs" style="left:906px;top:616.85px;width:651px;height:1.7px;background:#707070"></div>
<div class="abs" style="left:905.9px;top:464.3px;width:1.15px;height:154.3px;background:#161616"></div>
<div class="abs" style="left:1055.7px;top:465px;width:1px;height:153px;background:#bdbdbd"></div>
<div class="abs" style="left:1203.0px;top:464.3px;width:1.15px;height:154.3px;background:#161616"></div>
<div class="abs" style="left:1375.5px;top:465px;width:1px;height:153px;background:#bdbdbd"></div>
<div class="abs" style="left:1555.5px;top:464.3px;width:1.15px;height:154.3px;background:#161616"></div>
<div class="dl" style="left:910.5px;top:467px;font-weight:bold;">Hersteller:</div>
<div class="dl" style="left:1060.3px;top:467px;">Hersteller</div>
<div class="dl" style="left:1207.6px;top:467px;font-weight:bold;">Modell oder Baureihe:</div>
<div class="dl" style="left:1380.1px;top:467px;">Modell oder Baureihe</div>
<div class="dl" style="left:910.5px;top:505px;font-weight:bold;">Jahr:</div>
<div class="dl" style="left:1060.3px;top:505px;">Jahr</div>
<div class="dl" style="left:1207.6px;top:505px;font-weight:bold;">Farbe:</div>
<div class="dl" style="left:1380.1px;top:505px;">Farbe</div>
<div class="dl" style="left:910.5px;top:544px;font-weight:bold;"><span class="sp">FIN</span>:</div>
<div class="dl" style="left:1060.3px;top:544px;"><span class="sp">FIN</span></div>
<div class="dl" style="left:1207.6px;top:544px;font-weight:bold;">Karosserieart:</div>
<div class="dl" style="left:1380.1px;top:544px;">Karosserieart</div>
<div class="dl" style="left:910.5px;top:582px;font-weight:bold;">Kilometerstand:</div>
<div class="dl" style="left:1060.3px;top:582px;">Kilometerstand</div>
<div class="dl" style="left:1207.6px;top:582px;font-weight:bold;"><span class="sp">Kfz-Brief-Nr.</span>:</div>
<div class="dl" style="left:1380.1px;top:582px;"><span class="sp">Kfz-Brief-Nr.</span></div>
<div class="dl " style="letter-spacing:0.0038px;top:627px;left:907px;"><b>Der Verkauf erfolgt auf der Grundlage der folgenden Bedingungen und Stellungnahmen:</b></div>
<div class="dl " style="letter-spacing:0.0010px;top:657px;left:907px;">D<span class="bi">er Verkäufer bestätigt den Erhalt von <u>hier Betrag eingeben</u> € in bar für das Kfz, wobei die</span></div>
<div class="dl " style="letter-spacing:-0.0007px;top:677px;left:907px;"><span class="bi">vollständige Bezahlung vom Käufer und die Übertragung des Kfz-Briefs innerhalb von</span></div>
<div class="dl " style="letter-spacing:0.0152px;top:696px;left:907px;"><span class="bi"><u>Anzahl der Tage</u> Tagen zu erfolgen haben.</span></div>
<div class="dl " style="letter-spacing:0.0203px;top:726px;left:907px;"><span class="bi">Der Verkäufer räumt dem Käufer <u>Anzahl der Tage</u> Tage Zeit für die Untersuchung des <span class="sp">Kfzs</span></span></div>
<div class="dl " style="letter-spacing:0.0041px;top:745px;left:907px;"><span class="bi">durch einen unabhängigen Mechaniker ein und erklärt sich einverstande</span>n, den Verkauf zu</div>
<div class="dl " style="letter-spacing:0.0025px;top:765px;left:907px;">stornieren, wenn die Ergebnisse der Untersuchung für den Käufer unbefriedigend ausfallen.</div>
<div class="abs" style="left:906.5px;top:796px;width:553px;height:17.5px;background:#ffff00"></div>
<div class="abs" style="left:906.5px;top:815.5px;width:552.7px;height:17.2px;background:#ffff00"></div>
<div class="dl " style="top:795px;left:907px;width:552px;overflow:hidden;letter-spacing:0.0136px;">Wenn der Verkauf nicht zum Abschluss kommt, behält der Verkäufer <u>Betrag eingeben</u></div>
<div class="dl " style="letter-spacing:-0.0028px;top:814px;left:907px;">Barzahlung zur Deckung von Kosten und Aufwand für eine erneute Bekanntgabe ein.</div>
<div class="abs" style="left:1459px;top:795px;width:117px;height:17.5px;background:#808000;color:#fff;font-size:16px;line-height:18px;white-space:nowrap;overflow:hidden;letter-spacing:-0.1px">Karin Nordmann</div>
<div class="abs" style="left:1459.2px;top:815px;width:1.2px;height:18px;background:#5c5c00"></div>
<div class="dl " style="letter-spacing:0.0258px;top:844px;left:907px;">Der Verkäufer bestätigt, dass der auf dem Tachometer abgelesene Kilometerstand, der in der Kfz-</div>
<div class="dl " style="letter-spacing:-0.0060px;top:863px;left:907px;">Beschreibung oben aufgeführt ist, die tatsächliche Laufleistung des <span class="sp">Kfzs</span> wiedergibt. Der</div>
<div class="dl " style="letter-spacing:0.0168px;top:883px;left:907px;">Tachometer des <span class="sp">Kfzs</span> wurde nicht verändert, zurückgesetzt oder getrennt, während sich das Kfz im</div>
<div class="dl " style="letter-spacing:0.0158px;top:902px;left:907px;">Besitz des Verkäufers befand, und der Verkäufer hat keine Kenntnis von anderen Personen, die</div>
<div class="dl " style="letter-spacing:-0.0086px;top:921px;left:907px;">solche Maßnahmen am Kfz vorgenommen haben.</div>
<div class="dl " style="letter-spacing:0.0166px;top:951px;left:907px;">Der Verkäufer garantiert dem Käufer, dass er rechtskräftiger Besitzer des genannten Eigentums ist</div>
<div class="dl " style="letter-spacing:0.0053px;top:971px;left:907px;">und in jeder Hinsicht zum Verkauf und der Eigentumsübertragung des genannten Eigentums</div>
<div class="dl " style="letter-spacing:0.0092px;top:990px;left:907px;">berechtigt ist. Das Eigentum ist frei von Pfand- und Schuldenlasten und einem Verkauf</div>
<div class="dl " style="letter-spacing:0.0257px;top:1009px;left:907px;">entgegenstehenden Ansprüchen jeglicher Art.</div>
<div class="dl " style="letter-spacing:0.0259px;top:1039px;left:907px;">Der Verkäufer hat keine Kenntnis verborgener Fehler am Kfz oder seiner Teile und handelt im</div>
<div class="dl " style="letter-spacing:-0.0042px;top:1059px;left:907px;">festen Glauben auf seine Überzeugung, dass das Kfz in gutem Betriebszustand verkauft wird.</div>
<svg class="abs" style="left:910.5px;top:558px" width="23.7" height="6" viewBox="0 0 23.7 6"><path d="M0 3 Q2 6.1 4 3 Q6 -0.10000000000000009 8 3 Q10 6.1 12 3 Q14 -0.10000000000000009 16 3 Q18 6.1 20 3 Q22 -0.10000000000000009 24 3 Q26 6.1 28 3" fill="none" stroke="#ff2424" stroke-width="1.05"/></svg>
<svg class="abs" style="left:1060.3px;top:558px" width="23.7" height="6" viewBox="0 0 23.7 6"><path d="M0 3 Q2 6.1 4 3 Q6 -0.10000000000000009 8 3 Q10 6.1 12 3 Q14 -0.10000000000000009 16 3 Q18 6.1 20 3 Q22 -0.10000000000000009 24 3 Q26 6.1 28 3" fill="none" stroke="#ff2424" stroke-width="1.05"/></svg>
<svg class="abs" style="left:1207.6px;top:596px" width="85.9" height="6" viewBox="0 0 85.9 6"><path d="M0 3 Q2 6.1 4 3 Q6 -0.10000000000000009 8 3 Q10 6.1 12 3 Q14 -0.10000000000000009 16 3 Q18 6.1 20 3 Q22 -0.10000000000000009 24 3 Q26 6.1 28 3 Q30 -0.10000000000000009 32 3 Q34 6.1 36 3 Q38 -0.10000000000000009 40 3 Q42 6.1 44 3 Q46 -0.10000000000000009 48 3 Q50 6.1 52 3 Q54 -0.10000000000000009 56 3 Q58 6.1 60 3 Q62 -0.10000000000000009 64 3 Q66 6.1 68 3 Q70 -0.10000000000000009 72 3 Q74 6.1 76 3 Q78 -0.10000000000000009 80 3 Q82 6.1 84 3 Q86 -0.10000000000000009 88 3 Q90 6.1 92 3" fill="none" stroke="#ff2424" stroke-width="1.05"/></svg>
<svg class="abs" style="left:1380.1px;top:596px" width="80.2" height="6" viewBox="0 0 80.2 6"><path d="M0 3 Q2 6.1 4 3 Q6 -0.10000000000000009 8 3 Q10 6.1 12 3 Q14 -0.10000000000000009 16 3 Q18 6.1 20 3 Q22 -0.10000000000000009 24 3 Q26 6.1 28 3 Q30 -0.10000000000000009 32 3 Q34 6.1 36 3 Q38 -0.10000000000000009 40 3 Q42 6.1 44 3 Q46 -0.10000000000000009 48 3 Q50 6.1 52 3 Q54 -0.10000000000000009 56 3 Q58 6.1 60 3 Q62 -0.10000000000000009 64 3 Q66 6.1 68 3 Q70 -0.10000000000000009 72 3 Q74 6.1 76 3 Q78 -0.10000000000000009 80 3 Q82 6.1 84 3 Q86 -0.10000000000000009 88 3" fill="none" stroke="#ff2424" stroke-width="1.05"/></svg>
<svg class="abs" style="left:1503.5px;top:740px" width="31.0" height="6" viewBox="0 0 31.0 6"><path d="M0 3 Q2 6.1 4 3 Q6 -0.10000000000000009 8 3 Q10 6.1 12 3 Q14 -0.10000000000000009 16 3 Q18 6.1 20 3 Q22 -0.10000000000000009 24 3 Q26 6.1 28 3 Q30 -0.10000000000000009 32 3 Q34 6.1 36 3" fill="none" stroke="#ff2424" stroke-width="1.05"/></svg>
<svg class="abs" style="left:1345.8px;top:877px" width="28.5" height="6" viewBox="0 0 28.5 6"><path d="M0 3 Q2 6.1 4 3 Q6 -0.10000000000000009 8 3 Q10 6.1 12 3 Q14 -0.10000000000000009 16 3 Q18 6.1 20 3 Q22 -0.10000000000000009 24 3 Q26 6.1 28 3 Q30 -0.10000000000000009 32 3 Q34 6.1 36 3" fill="none" stroke="#ff2424" stroke-width="1.05"/></svg>
<svg class="abs" style="left:1015.6px;top:897px" width="28.6" height="6" viewBox="0 0 28.6 6"><path d="M0 3 Q2 6.1 4 3 Q6 -0.10000000000000009 8 3 Q10 6.1 12 3 Q14 -0.10000000000000009 16 3 Q18 6.1 20 3 Q22 -0.10000000000000009 24 3 Q26 6.1 28 3 Q30 -0.10000000000000009 32 3 Q34 6.1 36 3" fill="none" stroke="#ff2424" stroke-width="1.05"/></svg>
<div id="status">
  <div class="abs s" style="left:12px">Page 1 of 1</div>
  <div class="abs sv" style="left:83px"></div>
  <div class="abs s" style="left:94px">345 words, 2,507 characters</div>
  <div class="abs sv" style="left:256px"></div>
  <div class="abs s" style="left:265px">German (Germany)</div>
  <div class="abs dd g" style="left:375px;top:13px"></div>
  <div class="abs sv" style="left:393px"></div>
  <svg class="abs" style="left:1146px;top:5px" width="20" height="20" viewBox="0 0 20 20" fill="none"><path d="M3.500 8.500v4h5M16.500 8.500v4h-5" stroke="#333" stroke-width="1.100"/><path d="M10 11V3.500M7.500 6L10 3.400 12.500 6" stroke="#2a8fd6" stroke-width="1.300"/><path d="M3.500 16.300h13" stroke="#bbb" stroke-width="1"/></svg>
  <svg class="abs" style="left:1180px;top:6px" width="20" height="20" viewBox="0 0 20 20" fill="none"><path d="M3.500 2.800h13" stroke="#bbb" stroke-width="1"/><path d="M3.500 12.500v-5h4.300M16.500 12.500v-5h-4.300" stroke="#333" stroke-width="1.100"/><path d="M10 7.500v8M7.500 13l2.500 2.600 2.500-2.600" stroke="#2a8fd6" stroke-width="1.300"/></svg>
  <div class="abs sv" style="left:1210px"></div>
  <svg class="abs" style="left:1220px;top:5px" width="22" height="22" viewBox="0 0 22 22" fill="none"><circle cx="10.500" cy="10.300" r="6.800" stroke="#333" stroke-width="1.100" fill="#fff"/><path d="M15.500 15.300l2.300 2.300" stroke="#333" stroke-width="1.800"/><path d="M9.300 8.300l1.500-1v6" stroke="#2a8fd6" stroke-width="1.200"/></svg>
  <div class="abs" style="left:1260px;top:15px;width:10px;height:1.400px;background:#222"></div>
  <div class="abs s" style="left:1287px;color:#777;font-size:12px">100%</div>
  <div class="abs dd g" style="left:1324px;top:13px"></div>
  <div class="abs" style="left:1351px;top:15px;width:10.500px;height:1.400px;background:#222"></div>
  <div class="abs" style="left:1355.600px;top:10.500px;width:1.400px;height:10.500px;background:#222"></div>
</div>
<!-- popup -->
<div class="abs" style="left:1729px;top:156px;width:182px;height:114px;background:#fff;border-radius:3px;box-shadow:0 2px 6px rgba(0,0,0,.42);font-size:12px;color:#444">
  <svg class="abs" style="left:6px;top:4px" width="32" height="32" viewBox="0 0 32 32"><defs><clipPath id="c3"><circle cx="16" cy="15" r="12.300"/></clipPath></defs><circle cx="16" cy="15" r="13" fill="#fff" stroke="#333" stroke-width="1.800"/><g clip-path="url(#c3)" fill="#a9a9a9"><ellipse cx="16" cy="9.800" rx="4.400" ry="5.500"/><path d="M13.300 13v4.400c0 1.300-1 1.800-3.300 2.600-2.700.9-4.500 2.200-4.500 5v4h21v-4c0-2.800-1.800-4.100-4.500-5-2.300-.8-3.300-1.300-3.300-2.600V13z"/></g></svg>
  <svg class="abs" style="left:6px;top:40px" width="32" height="32" viewBox="0 0 32 32"><defs><clipPath id="c4"><circle cx="16" cy="15" r="12.300"/></clipPath></defs><circle cx="16" cy="15" r="13" fill="#fff" stroke="#4e9a1a" stroke-width="1.800"/><g clip-path="url(#c4)" fill="#a9a9a9"><ellipse cx="16" cy="9.800" rx="4.400" ry="5.500"/><path d="M13.300 13v4.400c0 1.300-1 1.800-3.300 2.600-2.700.9-4.500 2.200-4.500 5v4h21v-4c0-2.800-1.800-4.100-4.500-5-2.300-.8-3.300-1.300-3.300-2.600V13z"/></g></svg>
  <div class="abs" style="left:49px;top:11px;line-height:16px">You</div>
  <div class="abs" style="left:49px;top:47px;line-height:16px">Karin Nordmann</div>
  <div class="abs" style="left:14px;top:85px;width:16px;height:16px;border:1px solid #555;background:#fff"></div>
  <div class="abs" style="left:49px;top:85px;line-height:16px;white-space:nowrap">Always follow the editor</div>
</div>
</div></div>
</body>
</html>
